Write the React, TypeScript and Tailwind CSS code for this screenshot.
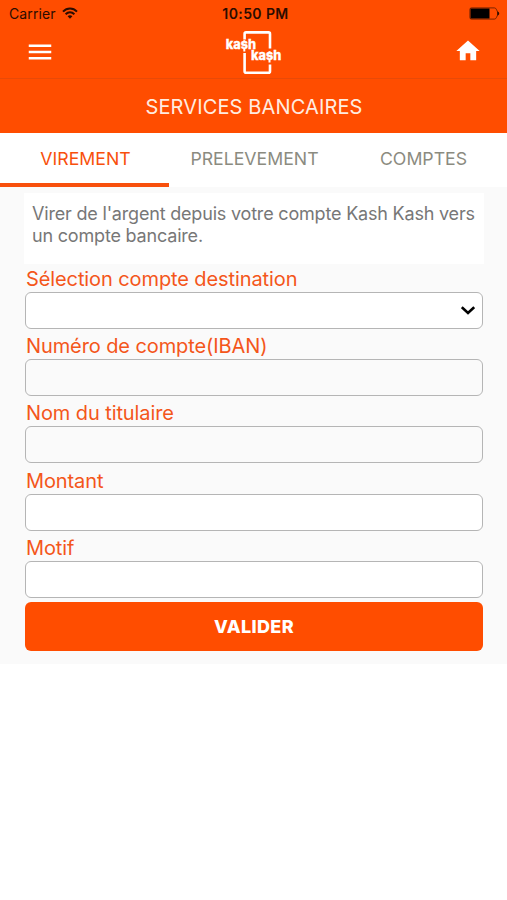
import { MdHome, MdMenu } from "react-icons/md";

const TABS = [
  { label: "VIREMENT", active: true },
  { label: "PRELEVEMENT", active: false },
  { label: "COMPTES", active: false },
];

const FIELDS = [
  { id: "iban", label: "Numéro de compte(IBAN)", disabled: true },
  { id: "holder", label: "Nom du titulaire", disabled: true },
  { id: "amount", label: "Montant", disabled: false },
  { id: "reason", label: "Motif", disabled: false },
];

function StatusBar() {
  return (
    <div className="grid h-[27px] grid-cols-3 items-center pl-[9px] pr-[7px] text-[#2b0c00]">
      <div className="flex items-center gap-1.5 text-[14px] tracking-[0.1px]">
        <span>Carrier</span>
        <svg className="-mt-0.5" width="16" height="12" viewBox="0 0 16 12" fill="none" stroke="currentColor" strokeWidth="2">
          <path d="M1 4.6C5 0.5 11 0.5 15 4.6" />
          <path d="M3.6 7.2C6.2 4.7 9.8 4.7 12.4 7.2" />
          <path d="M5.6 9.2C7 7.9 9 7.9 10.4 9.2L8 11.8Z" fill="currentColor" stroke="none" />
        </svg>
      </div>
      <span className="pl-0.5 text-center text-[14px] font-semibold tracking-[0.4px]">10:50 PM</span>
      <svg className="justify-self-end" width="31" height="13" viewBox="0 0 31 13">
        <path
          d="M2.4 0.9H25.4Q27 1 27.6 2.8L28.6 5V8L27.6 10.2Q27 12 25.4 12.1H2.4Q0.9 12.1 0.9 10.6V2.4Q0.9 0.9 2.4 0.9Z"
          fill="none"
          stroke="#6b2000"
          strokeWidth="0.9"
        />
        <rect x="1.5" y="1.5" width="19" height="10" fill="#000" />
        <path d="M28.4 4.5C30.8 5 30.8 8 28.4 8.5Z" fill="#2b0c00" />
      </svg>
    </div>
  );
}

function Logo() {
  return (
    <svg width="58" height="46" viewBox="0 0 58 46" fill="none">
      <path
        d="M20.6 10.5V4.9Q20.6 3.4 22.1 3.4H44.5Q46 3.4 46 4.9V19.5M20.6 24V42.3Q20.6 43.8 22.1 43.8H44.5Q46 43.8 46 42.3V35.5"
        stroke="#fff"
        strokeWidth="2.6"
      />
      <g fill="#fff" stroke="#fff" strokeWidth="0.3" fontSize="13" fontWeight="800" className="font-[Inter]">
        <text x="1.8" y="20.4" textLength="30.4" lengthAdjust="spacingAndGlyphs">kash</text>
        <text x="27" y="31.4" textLength="30.4" lengthAdjust="spacingAndGlyphs">kash</text>
      </g>
      {/* dollar ticks on the s */}
      <path d="M20.3 11.2V13.6M20.3 20V22.6M45.5 22.2V24.6M45.5 31V33.6" stroke="#fff" strokeWidth="2" />
    </svg>
  );
}

export default function App() {
  return (
    <div className="min-h-[900px] w-[507px] bg-white font-[Inter,sans-serif]">
      <header className="bg-[#ff4d00]">
        <StatusBar />
        <div className="grid h-[52px] grid-cols-3 items-center border-b border-[#e84a08] px-[25px] pb-[2px] text-white">
          <button aria-label="Menu">
            <MdMenu size={30} />
          </button>
          <div className="flex justify-center">
            <Logo />
          </div>
          <button aria-label="Accueil" className="-mt-0.5 justify-self-end">
            <MdHome size={28} />
          </button>
        </div>
        <h1 className="flex h-[54px] items-center justify-center pl-px pt-px text-[20px] tracking-[0.13px] text-[#ffece0]">
          SERVICES BANCAIRES
        </h1>
      </header>

      {/* tabs */}
      <nav className="grid h-[54px] grid-cols-3">
        {TABS.map(({ label, active }) => (
          <button
            key={label}
            className={
              active
                ? "border-b-4 border-[#f8500c] pl-0.5 pt-0.5 text-[17.7px] text-[#f8500c]"
                : "border-b-4 border-transparent pl-0.5 pt-0.5 text-[17.7px] text-[#8b8b80]"
            }
          >
            {label}
          </button>
        ))}
      </nav>

      <main className="h-[477px] bg-[#fafafa] pl-[25px] pr-6 pt-[6px]">
        <p className="-mx-px h-[71px] bg-white pl-2 pr-1 pt-[10px] text-[18px] leading-[22px] tracking-[-0.19px] text-[#777]">
          Virer de l'argent depuis votre compte Kash Kash vers un compte bancaire.
        </p>

        <form>
          <label htmlFor="account" className="flex h-7 items-center pl-px pt-0.5 text-[20px] tracking-[-0.1px] text-[#f4561a]">
            Sélection compte destination
          </label>
          <div className="mb-[2.2px] flex h-[37px] items-center justify-end rounded-md border border-[#b5b5b5] bg-white pr-[7px]" id="account">
            <svg width="14" height="9" viewBox="0 0 14 9" fill="none" stroke="#000" strokeWidth="2.6">
              <path d="M0.8 1.2L7 7L13.2 1.2" />
            </svg>
          </div>

          {FIELDS.map(({ id, label, disabled }) => (
            <div key={id} className="mb-[2.2px]">
              <label htmlFor={id} className="flex h-7 items-center pl-px pt-0.5 text-[20px] tracking-[-0.1px] text-[#f4561a]">
                {label}
              </label>
              <input
                id={id}
                disabled={disabled}
                className="block h-[37px] w-full rounded-md border border-[#b5b5b5] bg-white px-2 disabled:bg-[#fafafa]"
              />
            </div>
          ))}

          <button
            type="button"
            className="mt-1 block h-[49px] w-full rounded-md bg-[#ff4d00] text-[18px] font-extrabold tracking-[0.35px] text-white"
          >
            VALIDER
          </button>
        </form>
      </main>
    </div>
  );
}
